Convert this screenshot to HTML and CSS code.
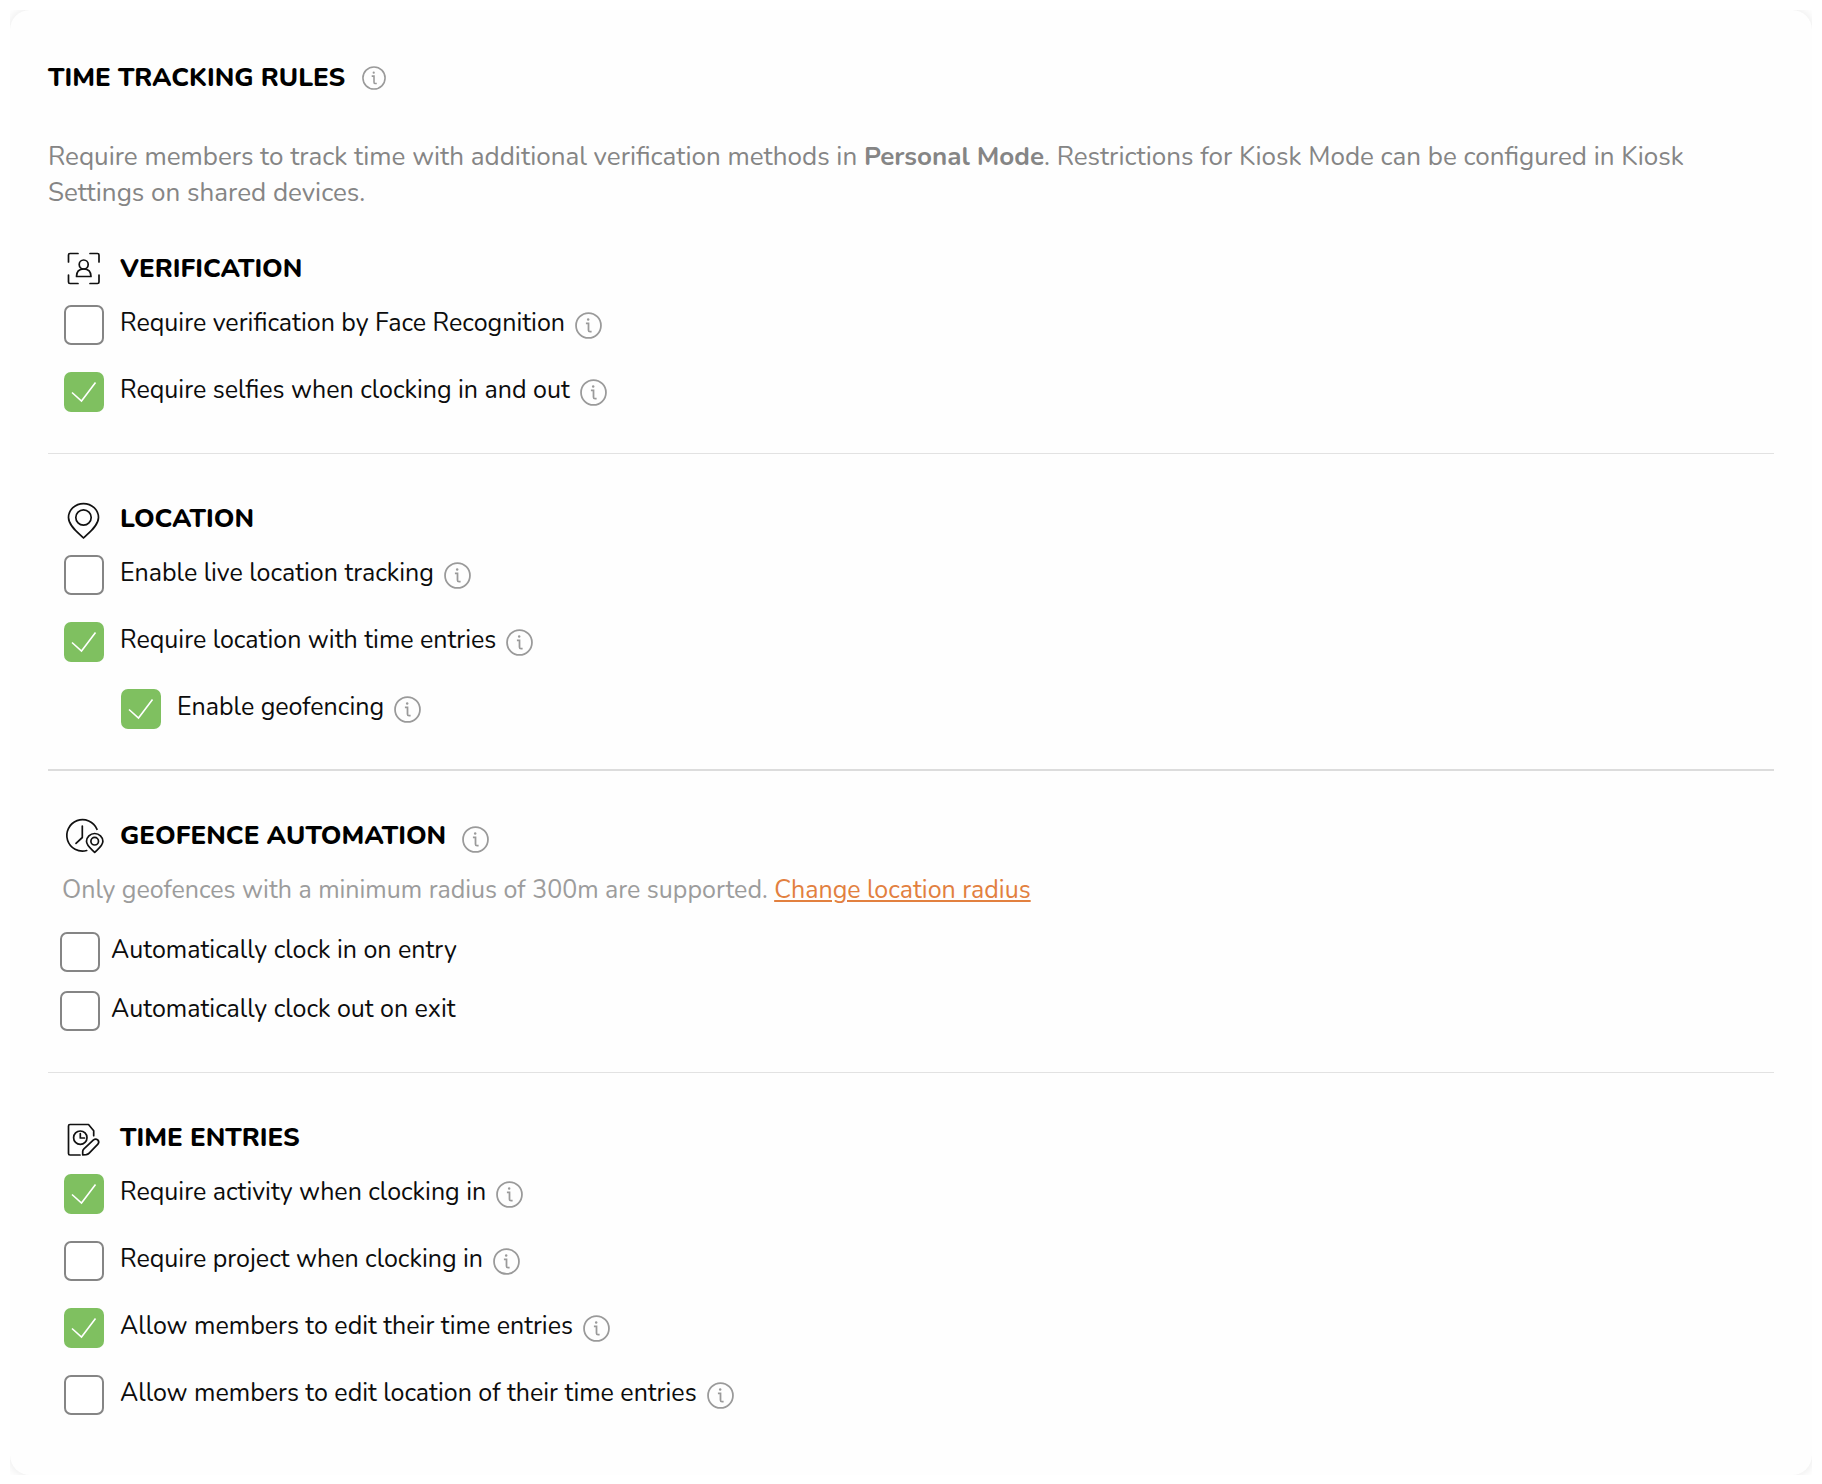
FILE: index.html
```html
<!DOCTYPE html>
<html lang="en">
<head>
<meta charset="UTF-8">
<meta name="viewport" content="width=device-width, initial-scale=1.0">
<link rel="stylesheet" href="styles.css">
<title>Time Tracking Rules</title>
</head>

<body>

  <!-- shared info icon -->
  <svg class="sprite" aria-hidden="true">
    <symbol id="info" viewBox="0 0 26 26">
      <circle cx="13" cy="13" r="12" />
      <path d="M10.500 11H13v6.500q0 1.500 1.500 1.500H16" />
      <circle class="dot" cx="12.700" cy="7.200" r="1.200" />
    </symbol>
  </svg>

  <main class="card">
    <header class="title">
      <h1>TIME TRACKING RULES</h1>
      <button type="button" class="info" aria-label="About time tracking rules"><svg><use href="#info" /></svg></button>
    </header>

    <p class="intro">Require members to track time with additional verification methods in <strong>Personal Mode</strong>. Restrictions for Kiosk Mode can be configured in Kiosk Settings on shared devices.</p>

    <section>
      <div class="heading">
        <svg class="icon" viewBox="0 0 40 40" aria-hidden="true">
          <path d="M4.500 13V6q0-1.500 1.500-1.500h8M26 4.500h7.500q1.500 0 1.500 1.500v7M35 26v7q0 1.500-1.500 1.500H26M14 34.500H6q-1.500 0-1.500-1.500v-7" />
          <circle cx="19.700" cy="15.500" r="4.500" />
          <path d="M12.500 27.500c0-5 3-7.500 7.200-7.500s7.300 2.500 7.300 7.500z" />
        </svg>
        <h2>VERIFICATION</h2>
      </div>
      <div class="row">
        <input type="checkbox" id="face">
        <label for="face">Require verification by Face Recognition</label>
        <button type="button" class="info" aria-label="About face recognition"><svg><use href="#info" /></svg></button>
      </div>
      <div class="row">
        <input type="checkbox" id="selfies" checked>
        <label for="selfies">Require selfies when clocking in and out</label>
        <button type="button" class="info" aria-label="About selfies"><svg><use href="#info" /></svg></button>
      </div>
    </section>

    <hr>

    <section>
      <div class="heading">
        <svg class="icon" viewBox="0 0 40 40" aria-hidden="true">
          <path d="M19.500 39C15 34.500 4.500 27 4.500 18.500a15 13.800 0 0 1 30 0C34.500 27 24 34.500 19.500 39z" />
          <circle cx="19.500" cy="18.500" r="7.700" />
        </svg>
        <h2>LOCATION</h2>
      </div>
      <div class="row">
        <input type="checkbox" id="live">
        <label for="live">Enable live location tracking</label>
        <button type="button" class="info" aria-label="About live location tracking"><svg><use href="#info" /></svg></button>
      </div>
      <div class="row">
        <input type="checkbox" id="location" checked>
        <label for="location">Require location with time entries</label>
        <button type="button" class="info" aria-label="About location with time entries"><svg><use href="#info" /></svg></button>
      </div>
      <div class="row nested">
        <input type="checkbox" id="geofencing" checked>
        <label for="geofencing">Enable geofencing</label>
        <button type="button" class="info" aria-label="About geofencing"><svg><use href="#info" /></svg></button>
      </div>
    </section>

    <hr class="thick">

    <section>
      <div class="heading">
        <svg class="icon" viewBox="0 0 40 40" aria-hidden="true">
          <path d="M33 13.300A15.700 15.700 0 1 0 22.700 34.500" />
          <path d="M18.300 10v11.500L12 27.300" />
          <path d="M30.700 36.300C28 33.500 22.500 30 22.500 25.300a8.200 7.800 0 0 1 16.400 0C38.900 30 33.400 33.500 30.700 36.300z" />
          <circle cx="30.700" cy="25.200" r="3.800" />
        </svg>
        <h2>GEOFENCE AUTOMATION</h2>
        <button type="button" class="info" aria-label="About geofence automation"><svg><use href="#info" /></svg></button>
      </div>
      <p class="note">Only geofences with a minimum radius of 300m are supported. <a href="#">Change location radius</a></p>
      <div class="automation">
        <div class="row">
          <input type="checkbox" id="clock-in">
          <label for="clock-in">Automatically clock in on entry</label>
        </div>
        <div class="row">
          <input type="checkbox" id="clock-out">
          <label for="clock-out">Automatically clock out on exit</label>
        </div>
      </div>
    </section>

    <hr>

    <section>
      <div class="heading">
        <svg class="icon" viewBox="0 0 40 40" aria-hidden="true">
          <path d="M29.700 17.700v-5l-5.200-6.200H6q-1.500 0-1.500 1.500v27.500q0 1.500 1.500 1.500h10" />
          <circle cx="16.300" cy="19.700" r="6.700" />
          <path d="M16.300 15.500V20h4.200" />
          <path d="M18.700 37v-3.500q0-1.500 1.200-2.600l9.600-9q2.200-1.600 4.200 0 2 2.200.2 4.300l-8.700 9q-1.200 1.300-3 1.500z" />
        </svg>
        <h2>TIME ENTRIES</h2>
      </div>
      <div class="row">
        <input type="checkbox" id="activity" checked>
        <label for="activity">Require activity when clocking in</label>
        <button type="button" class="info" aria-label="About activities"><svg><use href="#info" /></svg></button>
      </div>
      <div class="row">
        <input type="checkbox" id="project">
        <label for="project">Require project when clocking in</label>
        <button type="button" class="info" aria-label="About projects"><svg><use href="#info" /></svg></button>
      </div>
      <div class="row">
        <input type="checkbox" id="edit-entries" checked>
        <label for="edit-entries">Allow members to edit their time entries</label>
        <button type="button" class="info" aria-label="About editing time entries"><svg><use href="#info" /></svg></button>
      </div>
      <div class="row">
        <input type="checkbox" id="edit-location">
        <label for="edit-location">Allow members to edit location of their time entries</label>
        <button type="button" class="info" aria-label="About editing locations"><svg><use href="#info" /></svg></button>
      </div>
    </section>
  </main>

</body>
</html>
```

FILE: styles.css
```css
* {
  box-sizing: border-box;
}
body {
  margin: 10px;
  background-color: #fff;
  color: #0c0c0c;
  font-family: Nunito, Lato, sans-serif;
  font-size: 25px;
  line-height: 36px;
}
h1, h2, p {
  margin: 0;
}
h1, h2 {
  font-size: 26px;
  font-weight: 800;
  color: #000;
}
a {
  color: #e2803f;
}
hr {
  height: 1px;
  margin: 41px 0 45px;
  border: 0;
  background-color: #e2e2e2;
}
hr.thick {
  height: 2px;
  margin-top: 40px;
  background-color: #dcdcdc;
}

.card {
  padding: 50px 38px 60px;
  border-radius: 20px;
  background-color: #fefefe;
  box-shadow: 0 0 12px rgba(0, 0, 0, 0.1);
}

.title {
  display: flex;
  align-items: center;
  gap: 17px;
  margin-bottom: 43px;
}
.title .info {
  width: 24px;
  height: 24px;
}
.intro {
  margin-bottom: 38px;
  font-size: 26px;
  color: #858585;
}

/* section headings */
.heading {
  display: flex;
  align-items: center;
  gap: 16px;
  padding-left: 16px;
  margin-bottom: 16px;
}
.heading .info {
  margin-top: 6px;
}
.icon {
  width: 40px;
  height: 40px;
  fill: none;
  stroke: #111;
  stroke-width: 1.7;
  stroke-linecap: round;
  stroke-linejoin: round;
}

/* checkbox rows */
.row {
  display: flex;
  align-items: center;
  padding-left: 16px;
}
.row + .row {
  margin-top: 27px;
}
.row label {
  margin: 0 10px 0 16px;
  padding-bottom: 4px;
}
.row.nested {
  padding-left: 73px;
}
input[type="checkbox"] {
  appearance: none;
  width: 40px;
  height: 40px;
  margin: 0;
  border: 2px solid #858585;
  border-radius: 7px;
  background-color: #fff;
}
input[type="checkbox"]:checked {
  border: 0;
  background: #7fc060 url("data:image/svg+xml,%3Csvg xmlns='http://www.w3.org/2000/svg' viewBox='0 0 40 40' fill='none' stroke='white' stroke-width='1.6'%3E%3Cpath d='M8 20.500L17.500 29L31.500 10.500'/%3E%3C/svg%3E");
}

.info {
  width: 27px;
  height: 27px;
  padding: 0;
  border: 0;
  background: none;
  cursor: pointer;
}
.info svg {
  display: block;
  width: 100%;
  height: 100%;
  fill: none;
  stroke: #9a9a9a;
  stroke-width: 1.7;
}
.info .dot, .dot {
  fill: #9a9a9a;
  stroke: none;
}
.sprite {
  display: none;
}

.note {
  padding-left: 14px;
  margin-bottom: 24px;
  color: #9c9c9c;
}
.automation .row {
  padding-left: 12px;
}
.automation .row + .row {
  margin-top: 19px;
}
.automation label {
  margin-left: 11px;
}
```
